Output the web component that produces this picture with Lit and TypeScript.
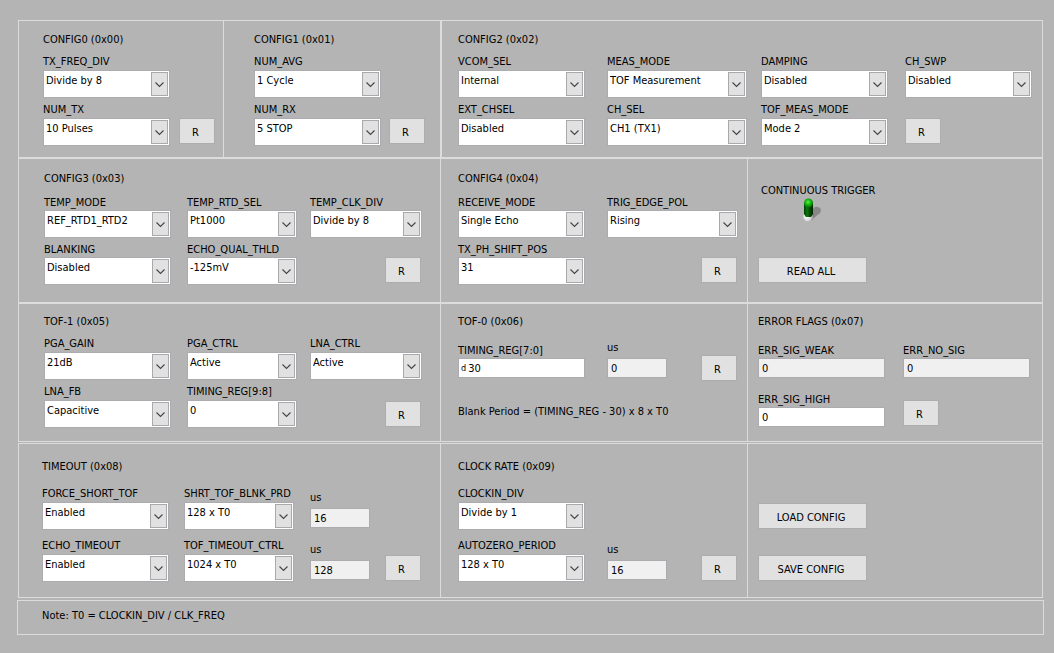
import { LitElement, html, css, svg, nothing, TemplateResult } from "lit";
import { customElement } from "lit/decorators.js";
import { classMap } from "lit/directives/class-map.js";

const OPTIONS: Record<string, string[]> = {
  TX_FREQ_DIV: ["Divide by 8", "Divide by 2", "Divide by 4", "Divide by 16"],
  NUM_TX: ["10 Pulses", "5 Pulses", "20 Pulses"],
  NUM_AVG: ["1 Cycle", "2 Cycles", "4 Cycles", "8 Cycles"],
  NUM_RX: ["5 STOP", "1 STOP", "2 STOP"],
};

@customElement("app-root")
export class AppRoot extends LitElement {
  static styles = css`
    :host {
      display: block;
      box-sizing: border-box;
      min-height: 100vh;
      padding: 20px 10px 18px 17px;
      background: #b4b4b4;
      color: #000;
      font: 11px/14px "DejaVu Sans Condensed", "Noto Sans", sans-serif;
    }
    * {
      box-sizing: border-box;
    }
    .band {
      display: grid;
      grid-template-columns: minmax(0, 421fr) minmax(0, 307fr) minmax(0, 295fr);
      margin: 0 1px;
      border: 1px solid #dcdcdc;
    }
    .band1 {
      grid-template-columns: minmax(0, 204fr) minmax(0, 217fr) minmax(0, 602fr);
    }
    .band4 {
      margin-top: 1px;
    }
    .panel {
      display: grid;
      align-items: end;
      white-space: nowrap;
    }
    .panel + .panel {
      border-left: 1px solid #dcdcdc;
    }
    .band1 .panel {
      grid-template-rows: 16px 50px 48px;
      padding: 11px 0 11px 24px;
    }
    .band2 .panel {
      grid-template-rows: 16px 51px 47px;
      padding: 12px 0 17px 25px;
    }
    .band3 .panel {
      grid-template-rows: 16px 50px 48px;
      padding: 10px 0 13px 25px;
    }
    .band4 .panel {
      grid-template-rows: 16px 55px 52px;
      padding: 15px 0 15px 23px;
    }
    .band3 .panel.timing {
      grid-template-rows: 16px 52px 37px;
    }
    .band3 .panel.flags {
      grid-template-rows: 16px 48px 49px;
    }
    .band .panel.duo {
      grid-template-columns: minmax(0, 136fr) minmax(0, 44fr);
    }
    .band .panel.averaging {
      grid-template-columns: minmax(0, 135fr) minmax(0, 51fr);
      padding-left: 30px;
    }
    .band .panel.wide {
      grid-template-columns: minmax(0, 149fr) minmax(0, 154fr) minmax(0, 144fr) minmax(0, 137fr);
      padding-left: 16px;
      border-left-width: 2px;
    }
    .quad {
      grid-template-columns: minmax(0, 143fr) minmax(0, 123fr) minmax(0, 75fr) minmax(0, 55fr);
    }
    .band4 .quad {
      grid-template-columns: minmax(0, 142fr) minmax(0, 126fr) minmax(0, 75fr) minmax(0, 55fr);
    }
    .trio {
      grid-template-columns: minmax(0, 149fr) minmax(0, 94fr) minmax(0, 46fr);
    }
    .pair {
      grid-template-columns: minmax(0, 145fr) minmax(0, 139fr);
    }
    .band .panel.trio {
      padding-left: 17px;
    }
    .band .panel.pair {
      padding-left: 10px;
    }
    h2 {
      grid-column: 1 / -1;
      margin: 0;
      font: inherit;
      line-height: 16px;
    }
    .field {
      display: flex;
      flex-direction: column;
      gap: 1px;
      width: 127px;
      max-width: 100%;
    }
    .band2 .field,
    .timing .field,
    .flags .field {
      gap: 0;
    }
    .w109 {
      width: 110px;
    }
    .w112 {
      width: 112px;
    }
    .w131 {
      width: 131px;
    }
    .w140 {
      width: 140px;
    }
    .w60 {
      width: 60px;
    }
    .span2 {
      grid-column: span 2;
    }
    .band .field.unit {
      gap: 3px;
      margin-bottom: 2px;
    }
    .band .timing .field {
      margin-bottom: 4px;
    }
    .col1 {
      grid-column: 1;
    }
    .last {
      grid-column-end: -1;
    }
    .pick {
      position: relative;
      display: block;
    }
    select,
    input,
    button {
      margin: 0;
      border: 1px solid #acacb0;
      border-radius: 0;
      color: #000;
      font: inherit;
    }
    select {
      display: block;
      width: 100%;
      height: 28px;
      padding: 0 20px 6px 2px;
      appearance: none;
      background: #fff;
    }
    .arrow {
      position: absolute;
      top: 2px;
      right: 2px;
      width: 17px;
      height: 24px;
      border: 1px solid #a9a9ab;
      background: #e1e1e1;
      pointer-events: none;
    }
    .box {
      display: flex;
      align-items: center;
      height: 20px;
      border: 1px solid #acacb0;
      background: #fff;
    }
    .box input {
      flex: 1;
      min-width: 0;
      height: 18px;
      padding: 0 3px;
      border: 0;
      background: none;
    }
    .readonly {
      background: #f0f0f0;
    }
    .radix {
      padding-left: 2px;
      font-size: 9px;
    }
    .radix + input {
      padding-left: 2px;
    }
    button {
      width: 36px;
      height: 26px;
      margin-bottom: 1px;
      padding: 3px 3px 0 0;
      border-color: #adadad;
      background: #e1e1e1;
    }
    .band1 button,
    .band2 button {
      margin-bottom: 2px;
    }
    .band button.big {
      grid-column: 1;
      width: 109px;
    }
    .formula {
      grid-column: 1 / -1;
    }
    .trigger {
      position: relative;
      display: flex;
      flex-direction: column;
      align-items: center;
      align-self: center;
      justify-self: start;
      grid-row: 1 / 3;
      grid-column: 1 / -1;
      padding: 0 0 2px 3px;
    }
    .trigger input {
      position: absolute;
      inset: 0;
      width: 100%;
      height: 100%;
      opacity: 0;
    }
    .note {
      margin: 2px 0 0;
      padding: 8px 24px 11px;
      border: 1px solid #dcdcdc;
    }
  `;

  private pick(name: string, value: string, cls = ""): TemplateResult {
    const options = OPTIONS[name] ?? [value];
    return html`<div class="field ${cls}">
      <label for=${name}>${name}</label>
      <span class="pick">
        <select id=${name}>
          ${options.map((o) => html`<option ?selected=${o === value}>${o}</option>`)}
        </select>
        <svg class="arrow" viewBox="0 0 15 22" aria-hidden="true">
          <path d="M3.5 9.5 L7.5 13.5 L11.5 9.5" fill="none" stroke="#444" stroke-width="1.1" />
        </svg>
      </span>
    </div>`;
  }

  private text(id: string, label: string, value: string, cls = "", readonly = true, radix = ""): TemplateResult {
    return html`<div class="field ${cls}">
      <label for=${id}>${label}</label>
      <span class=${classMap({ box: true, readonly })}>
        ${radix ? html`<span class="radix">${radix}</span>` : nothing}
        <input id=${id} type="text" .value=${value} ?readonly=${readonly} />
      </span>
    </div>`;
  }

  private read(register: string, cls = "last"): TemplateResult {
    return html`<button type="button" class=${cls} aria-label="R ${register}">R</button>`;
  }

  private toggle(): TemplateResult {
    return html`<svg width="32" height="26" viewBox="0 0 32 26" aria-hidden="true">
      ${svg`
        <defs>
          <linearGradient id="lever" x1="0" x2="1">
            <stop offset="0" stop-color="#033d03" />
            <stop offset=".35" stop-color="#0a7a0a" />
            <stop offset=".6" stop-color="#055005" />
            <stop offset="1" stop-color="#012001" />
          </linearGradient>
          <radialGradient id="tip" cx=".45" cy=".4" r=".6">
            <stop offset="0" stop-color="#5ff04a" />
            <stop offset=".5" stop-color="#14b80e" />
            <stop offset="1" stop-color="#067006" />
          </radialGradient>
          <radialGradient id="base" cx=".35" cy=".6" r=".65">
            <stop offset="0" stop-color="#fff" />
            <stop offset=".6" stop-color="#d0d0d0" />
            <stop offset="1" stop-color="#707070" />
          </radialGradient>
        </defs>
        <path d="M9 13 L12 9.500 Q16 7.500 18.500 10.500 Q20 14.500 16 16.500 L12 20 Z" fill="#888" />
        <circle cx="6.500" cy="18" r="5.500" fill="url(#base)" />
        <path d="M2 5 h9 v11 l-2 3 h-5 l-2 -3 Z" fill="url(#lever)" />
        <circle cx="6.500" cy="5" r="4.500" fill="url(#tip)" />
      `}
    </svg>`;
  }

  render() {
    return html`
      <section class="band band1">
        <div class="panel duo">
          <h2>CONFIG0 (0x00)</h2>
          ${this.pick("TX_FREQ_DIV", "Divide by 8", "col1")}
          ${this.pick("NUM_TX", "10 Pulses", "col1")}
          ${this.read("CONFIG0")}
        </div>
        <div class="panel averaging">
          <h2>CONFIG1 (0x01)</h2>
          ${this.pick("NUM_AVG", "1 Cycle", "col1")}
          ${this.pick("NUM_RX", "5 STOP", "col1")}
          ${this.read("CONFIG1")}
        </div>
        <div class="panel wide">
          <h2>CONFIG2 (0x02)</h2>
          ${this.pick("VCOM_SEL", "Internal")}
          ${this.pick("MEAS_MODE", "TOF Measurement", "w140")}
          ${this.pick("DAMPING", "Disabled")}
          ${this.pick("CH_SWP", "Disabled")}
          ${this.pick("EXT_CHSEL", "Disabled")}
          ${this.pick("CH_SEL", "CH1 (TX1)", "w140")}
          ${this.pick("TOF_MEAS_MODE", "Mode 2")}
          ${this.read("CONFIG2")}
        </div>
      </section>

      <section class="band band2">
        <div class="panel quad">
          <h2>CONFIG3 (0x03)</h2>
          ${this.pick("TEMP_MODE", "REF_RTD1_RTD2")}
          ${this.pick("TEMP_RTD_SEL", "Pt1000", "w109")}
          ${this.pick("TEMP_CLK_DIV", "Divide by 8", "w112 span2")}
          ${this.pick("BLANKING", "Disabled")}
          ${this.pick("ECHO_QUAL_THLD", "-125mV", "w109")}
          ${this.read("CONFIG3")}
        </div>
        <div class="panel trio">
          <h2>CONFIG4 (0x04)</h2>
          ${this.pick("RECEIVE_MODE", "Single Echo")}
          ${this.pick("TRIG_EDGE_POL", "Rising", "w131 span2")}
          ${this.pick("TX_PH_SHIFT_POS", "31")}
          ${this.read("CONFIG4")}
        </div>
        <div class="panel pair">
          <label class="trigger">
            CONTINUOUS TRIGGER
            <input type="checkbox" checked />
            ${this.toggle()}
          </label>
          <button type="button" class="big">READ ALL</button>
        </div>
      </section>

      <section class="band band3">
        <div class="panel quad">
          <h2>TOF-1 (0x05)</h2>
          ${this.pick("PGA_GAIN", "21dB")}
          ${this.pick("PGA_CTRL", "Active", "w109")}
          ${this.pick("LNA_CTRL", "Active", "w112 span2")}
          ${this.pick("LNA_FB", "Capacitive")}
          ${this.pick("TIMING_REG[9:8]", "0", "w109")}
          ${this.read("TOF-1")}
        </div>
        <div class="panel trio timing">
          <h2>TOF-0 (0x06)</h2>
          ${this.text("timing-low", "TIMING_REG[7:0]", "30", "", false, "d")}
          ${this.text("blank-us", "us", "0", "unit w60")}
          ${this.read("TOF-0")}
          <span class="formula">Blank Period = (TIMING_REG - 30) x 8 x T0</span>
        </div>
        <div class="panel pair flags">
          <h2>ERROR FLAGS (0x07)</h2>
          ${this.text("err-weak", "ERR_SIG_WEAK", "0")}
          ${this.text("err-none", "ERR_NO_SIG", "0")}
          ${this.text("err-high", "ERR_SIG_HIGH", "0", "", false)}
          ${this.read("ERROR FLAGS")}
        </div>
      </section>

      <section class="band band4">
        <div class="panel quad">
          <h2>TIMEOUT (0x08)</h2>
          ${this.pick("FORCE_SHORT_TOF", "Enabled")}
          ${this.pick("SHRT_TOF_BLNK_PRD", "128 x T0", "w109")}
          ${this.text("short-us", "us", "16", "unit w60")}
          ${this.pick("ECHO_TIMEOUT", "Enabled", "col1")}
          ${this.pick("TOF_TIMEOUT_CTRL", "1024 x T0", "w109")}
          ${this.text("timeout-us", "us", "128", "unit w60")}
          ${this.read("TIMEOUT")}
        </div>
        <div class="panel trio">
          <h2>CLOCK RATE (0x09)</h2>
          ${this.pick("CLOCKIN_DIV", "Divide by 1")}
          ${this.pick("AUTOZERO_PERIOD", "128 x T0", "col1")}
          ${this.text("autozero-us", "us", "16", "unit w60")}
          ${this.read("CLOCK RATE")}
        </div>
        <div class="panel pair">
          <h2></h2>
          <button type="button" class="big">LOAD CONFIG</button>
          <button type="button" class="big">SAVE CONFIG</button>
        </div>
      </section>

      <p class="note">Note: T0 = CLOCKIN_DIV / CLK_FREQ</p>
    `;
  }
}
